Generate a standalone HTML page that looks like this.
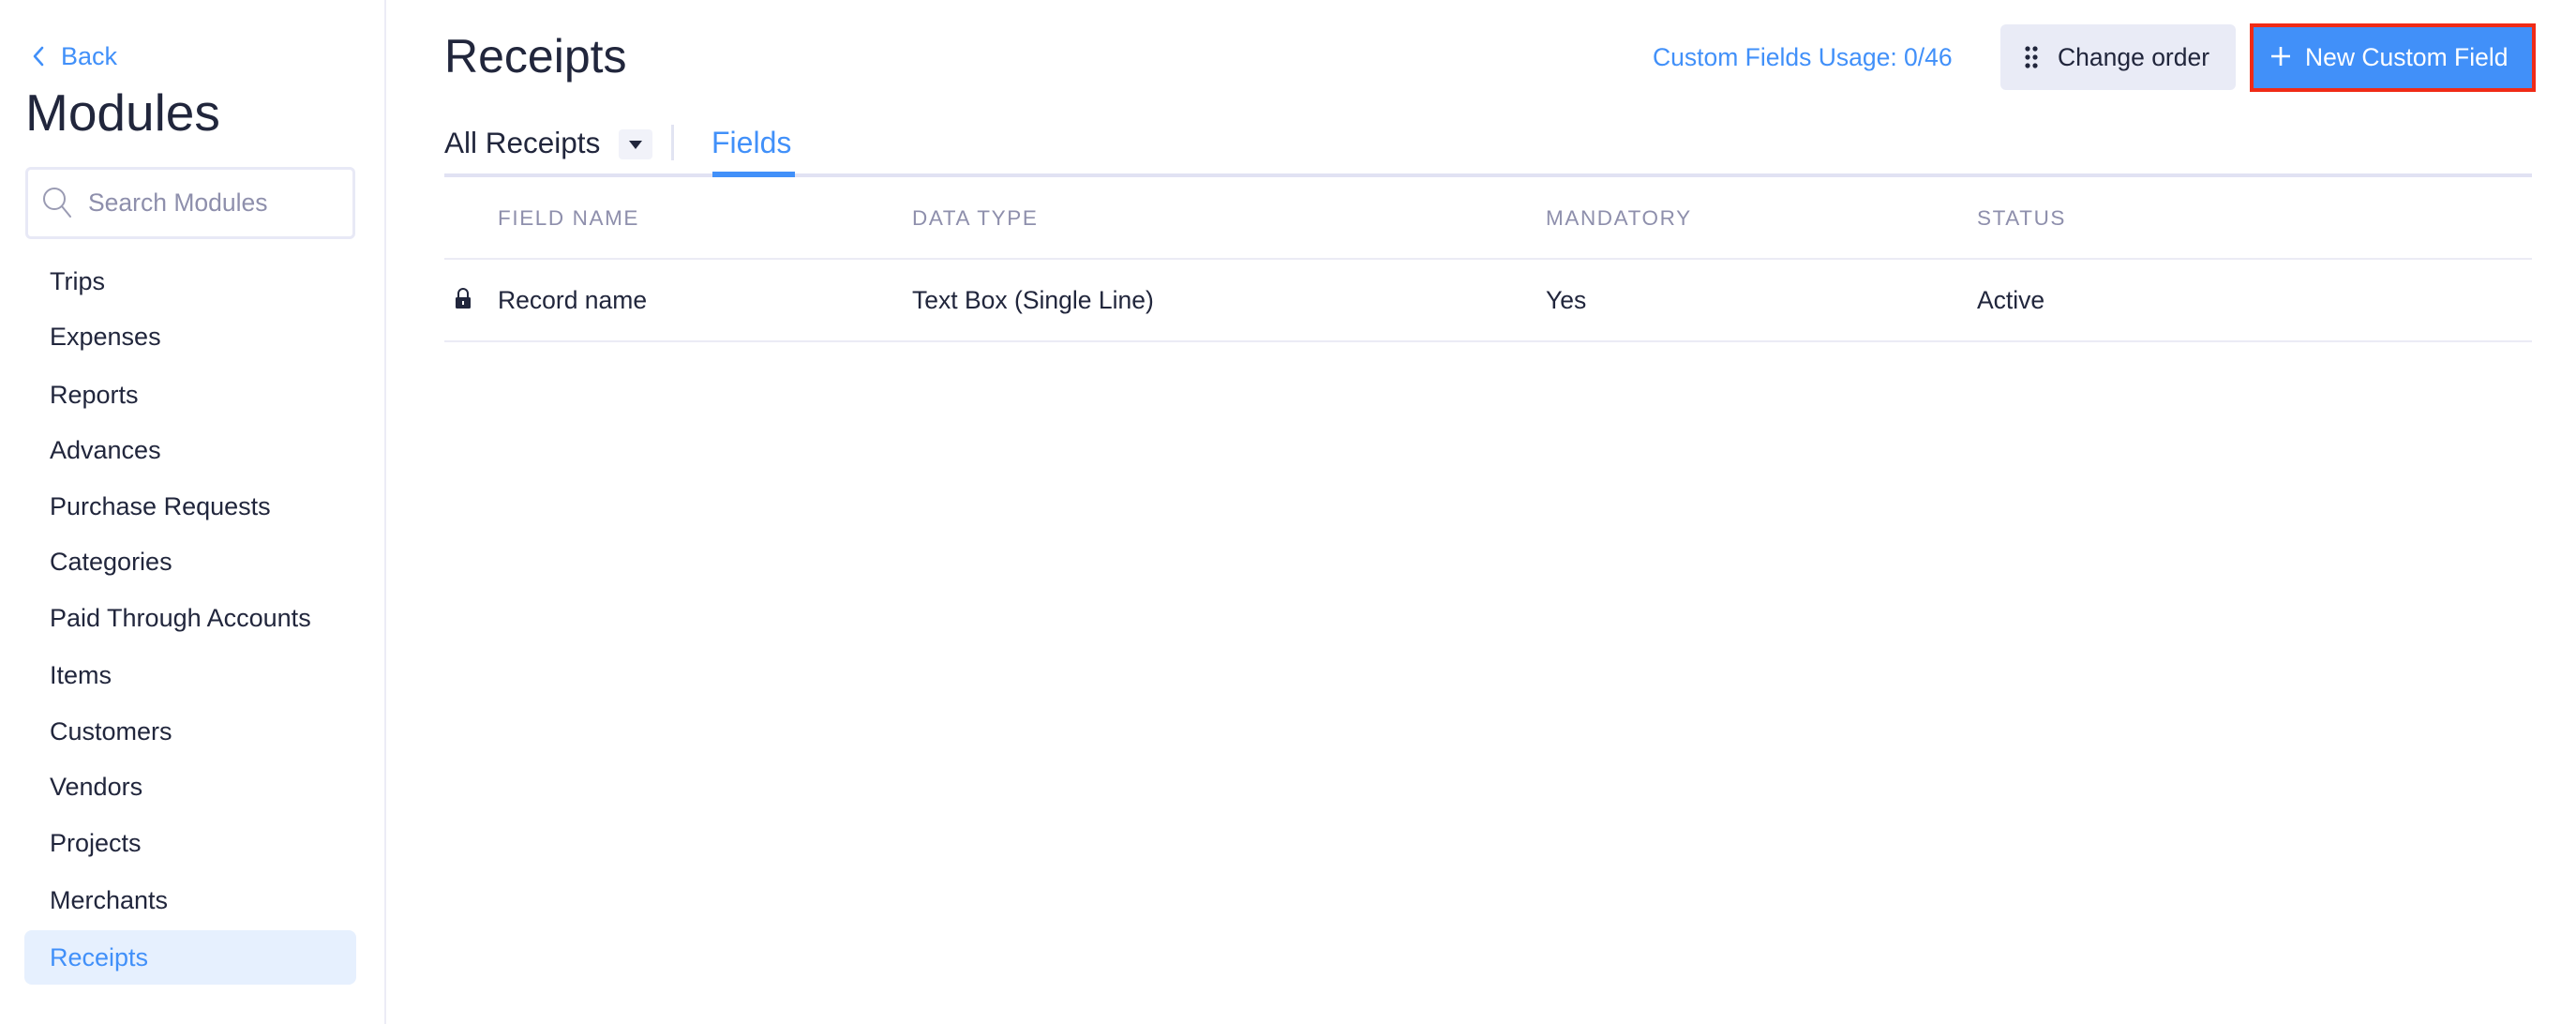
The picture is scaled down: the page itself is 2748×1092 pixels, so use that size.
<!DOCTYPE html>
<html><head><meta charset="utf-8"><style>
*{margin:0;padding:0;box-sizing:border-box}
body{width:2748px;height:1092px;background:#fff;font-family:"Liberation Sans",sans-serif;color:#21263c;position:relative;overflow:hidden}
.a{position:absolute;white-space:nowrap}
.side{position:absolute;left:0;top:0;width:412px;height:1092px;border-right:2px solid #ececf6}
.item{position:absolute;left:53px;font-size:27px;line-height:30px}
.hd{font-size:22.5px;color:#8e8fac;letter-spacing:1.6px;line-height:26px}
.td{font-size:26.5px;line-height:30px}
</style></head><body>
<div class="side"></div>
<svg class="a" style="left:34px;top:49px" width="14" height="22" viewBox="0 0 14 22"><path d="M11 2 L3 11 L11 20" stroke="#4190f9" stroke-width="2.6" fill="none" stroke-linecap="round" stroke-linejoin="round"/></svg>
<div class="a" style="left:65px;top:44px;font-size:27px;color:#4190f9;line-height:32px">Back</div>
<div class="a" style="left:27px;top:88px;font-size:55px;line-height:64px">Modules</div>
<div class="a" style="left:27px;top:178px;width:352px;height:77px;border:3px solid #e8e9f6;border-radius:6px"></div>
<svg class="a" style="left:45px;top:199px" width="32" height="34" viewBox="0 0 32 34"><circle cx="13" cy="13" r="11" stroke="#9a9bb3" stroke-width="2" fill="none"/><path d="M21 21 L30 32" stroke="#9a9bb3" stroke-width="2" stroke-linecap="round"/></svg>
<div class="a" style="left:94px;top:201px;font-size:26.5px;color:#8e8fac;line-height:30px">Search Modules</div>
<div class="item" style="top:285px">Trips</div>
<div class="item" style="top:344px">Expenses</div>
<div class="item" style="top:406px">Reports</div>
<div class="item" style="top:465px">Advances</div>
<div class="item" style="top:525px">Purchase Requests</div>
<div class="item" style="top:584px">Categories</div>
<div class="item" style="top:644px">Paid Through Accounts</div>
<div class="item" style="top:705px">Items</div>
<div class="item" style="top:765px">Customers</div>
<div class="item" style="top:824px">Vendors</div>
<div class="item" style="top:884px">Projects</div>
<div class="item" style="top:945px">Merchants</div>
<div class="a" style="left:26px;top:992px;width:354px;height:58px;background:#e6f0fe;border-radius:8px"></div>
<div class="item" style="top:1006px;color:#4190f9">Receipts</div>

<div class="a" style="left:474px;top:31px;font-size:50px;line-height:58px">Receipts</div>
<div class="a" style="left:1763px;top:45px;font-size:26.5px;color:#4190f9;line-height:32px">Custom Fields Usage: 0/46</div>
<div class="a" style="left:2134px;top:26px;width:251px;height:70px;background:#e9ebf6;border-radius:6px"></div>
<svg class="a" style="left:2160px;top:49px" width="14" height="24" viewBox="0 0 14 24"><g fill="#21263c"><circle cx="3" cy="3" r="2.6"/><circle cx="11" cy="3" r="2.6"/><circle cx="3" cy="12" r="2.6"/><circle cx="11" cy="12" r="2.6"/><circle cx="3" cy="21" r="2.6"/><circle cx="11" cy="21" r="2.6"/></g></svg>
<div class="a" style="left:2195px;top:45px;font-size:26.5px;line-height:32px">Change order</div>
<div class="a" style="left:2400px;top:25px;width:305px;height:73px;border:4px solid #f02b17;background:#4190f9"></div>
<svg class="a" style="left:2422px;top:49px" width="22" height="22" viewBox="0 0 22 22"><path d="M11 1V21M1 11H21" stroke="#fff" stroke-width="2.6"/></svg>
<div class="a" style="left:2459px;top:45px;font-size:26.5px;color:#fff;line-height:32px">New Custom Field</div>

<div class="a" style="left:474px;top:134px;font-size:31.5px;line-height:36px">All Receipts</div>
<div class="a" style="left:660px;top:138px;width:36px;height:32px;background:#f1f2f9;border-radius:4px"></div>
<svg class="a" style="left:670px;top:149px" width="16" height="11" viewBox="0 0 16 11"><path d="M1 1H15L8 10Z" fill="#21263c"/></svg>
<div class="a" style="left:716px;top:133px;width:3px;height:38px;background:#e2e4f2"></div>
<div class="a" style="left:759px;top:134px;font-size:32px;color:#4190f9;line-height:36px">Fields</div>
<div class="a" style="left:474px;top:185px;width:2227px;height:4px;background:#e1e2f3"></div>
<div class="a" style="left:760px;top:183px;width:88px;height:6px;background:#4190f9"></div>

<div class="a hd" style="left:531px;top:220px">FIELD NAME</div>
<div class="a hd" style="left:973px;top:220px">DATA TYPE</div>
<div class="a hd" style="left:1649px;top:220px">MANDATORY</div>
<div class="a hd" style="left:2109px;top:220px">STATUS</div>
<div class="a" style="left:474px;top:275px;width:2227px;height:2px;background:#ebebf5"></div>
<svg class="a" style="left:485px;top:306px" width="18" height="24" viewBox="0 0 18 24"><path d="M4 11V7a5 5 0 0 1 10 0v4" stroke="#21263c" stroke-width="2" fill="none"/><rect x="1" y="11" width="16" height="12" rx="1.5" fill="#21263c"/><rect x="8" y="15" width="2" height="4" fill="#fff"/></svg>
<div class="a td" style="left:531px;top:305px">Record name</div>
<div class="a td" style="left:973px;top:305px">Text Box (Single Line)</div>
<div class="a td" style="left:1649px;top:305px">Yes</div>
<div class="a td" style="left:2109px;top:305px">Active</div>
<div class="a" style="left:474px;top:363px;width:2227px;height:2px;background:#ebebf5"></div>
</body></html>
